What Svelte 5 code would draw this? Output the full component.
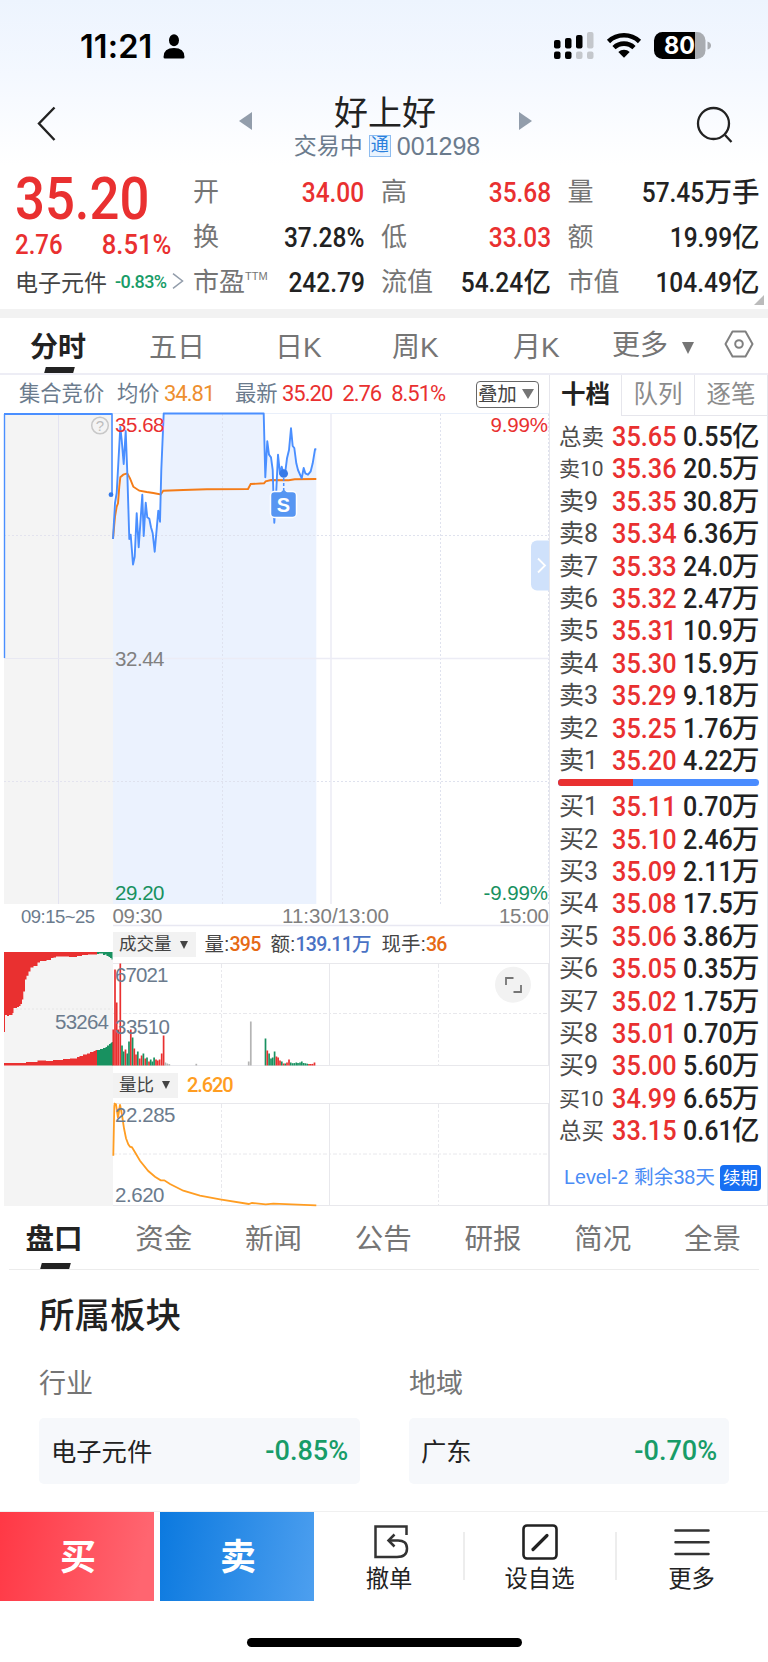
<script lang="ts">
    type Row = [string, string, string, string];

    const quotes = [
        { label: '开', value: '34.00', up: true },
        { label: '高', value: '35.68', up: true },
        { label: '量', value: '57.45', unit: '万手' },
        { label: '换', value: '37.28%' },
        { label: '低', value: '33.03', up: true },
        { label: '额', value: '19.99', unit: '亿' },
        { label: '市盈', sup: 'TTM', value: '242.79' },
        { label: '流值', value: '54.24', unit: '亿' },
        { label: '市值', value: '104.49', unit: '亿' },
    ];

    const periods = ['分时', '五日', '日K', '周K', '月K'];
    const sections = ['盘口', '资金', '新闻', '公告', '研报', '简况', '全景'];

    const asks: Row[] = [
        ['总卖', '35.65', '0.55', '亿'],
        ['卖10', '35.36', '20.5', '万'],
        ['卖9', '35.35', '30.8', '万'],
        ['卖8', '35.34', '6.36', '万'],
        ['卖7', '35.33', '24.0', '万'],
        ['卖6', '35.32', '2.47', '万'],
        ['卖5', '35.31', '10.9', '万'],
        ['卖4', '35.30', '15.9', '万'],
        ['卖3', '35.29', '9.18', '万'],
        ['卖2', '35.25', '1.76', '万'],
        ['卖1', '35.20', '4.22', '万'],
    ];
    const bids: Row[] = [
        ['买1', '35.11', '0.70', '万'],
        ['买2', '35.10', '2.46', '万'],
        ['买3', '35.09', '2.11', '万'],
        ['买4', '35.08', '17.5', '万'],
        ['买5', '35.06', '3.86', '万'],
        ['买6', '35.05', '0.35', '万'],
        ['买7', '35.02', '1.75', '万'],
        ['买8', '35.01', '0.70', '万'],
        ['买9', '35.00', '5.60', '万'],
        ['买10', '34.99', '6.65', '万'],
        ['总买', '33.15', '0.61', '亿'],
    ];

    const boards = [
        { kind: '行业', name: '电子元件', change: '-0.85%' },
        { kind: '地域', name: '广东', change: '-0.70%' },
    ];

    const price =
        '113,539 115,503 116.7,493 120.3,427 121.7,440 123.7,464 125.7,431 127.3,473 129.3,539 130.7,534.7 133,564.5 134.7,556.7 136.7,513.3 138.7,547.3 142.3,494.7 143.7,536 145.7,502.7 147.3,517.3 149.3,518.7 151,527.3 152.7,533.3 154.7,551.7 158.3,510.7 160,521.7 161.3,470 163.7,413.5 263.7,413.5 265.3,477.3 267.3,441.3 269,454.7 271,457.3 272.7,470 274.3,522.7 276.3,490 278,454.7 280,474 281.7,466.7 283.7,474 285.3,471.7 287,458.3 289,450 291,428.3 292.7,446 294.3,448 296.3,463.3 298,470 301.7,478.3 303.7,468 305.3,473.3 308,474.7 310.7,471.3 312.7,463.3 315,449.3 316.3,449.3';
    const average =
        '113,539 115,516.7 116.7,506.7 118,503.3 119.3,486.7 120.3,477.3 123.3,474.7 127.3,473.3 130,478.3 133.3,486.7 139.3,490.7 146.7,492 153.3,493 160.7,494.5 163.3,490.7 183.3,490 206.7,489.3 248,489 250.7,484 264,483.3 265.7,481.3 271,480 288.7,480.3 294.7,479.3 316.3,479';
    const ratio =
        '113.3,1155.7 114.3,1106 114.7,1103.7 116,1104.3 118,1118 120,1104.3 122,1115 124,1128.3 126,1138.3 128.3,1144.3 130,1146.7 132,1147.3 134.7,1151.7 140,1160.7 148.3,1171 155,1176.7 160.7,1180.3 164.3,1180.3 170,1184 183.3,1190.7 200,1195.7 220,1199.3 248.7,1204 252,1203 265.7,1204.3 273.3,1203.7 316.3,1205.3';

    // volume bars: x, height, colour key
    const volume: [number, number, string][] = [
        [113.3, 36, 'r'], [115, 96, 'r'], [116.7, 63, 'r'], [118.3, 36, 'r'], [120.3, 102, 'r'],
        [122, 20, 'g'], [123.7, 14, 'g'], [125.5, 16, 'r'], [127.3, 12, 'g'], [129, 24, 'g'],
        [130.8, 36, 'r'], [132.6, 28, 'g'], [134.3, 17, 'r'], [136, 11, 'r'], [137.8, 14, 'g'],
        [139.7, 7, 'r'], [141.6, 10, 'r'], [143.4, 12, 'g'], [145.3, 7, 'r'], [147, 8, 'g'],
        [149, 4, 'r'], [150.7, 6, 'g'], [152.4, 4, 'g'], [154.1, 8, 'g'], [156, 6, 'r'],
        [157.7, 5, 'r'], [159.6, 6, 'r'], [161.7, 12, 'r'], [163.6, 30, 'r'], [165.4, 3, 'n'],
        [167.3, 2, 'n'], [169.3, 1.4, 'n'], [196.3, 1.7, 'n'], [248.7, 4, 'n'], [250.8, 44, 'n'],
        [265.5, 27, 'g'], [267.3, 15, 'r'], [269.1, 12, 'g'], [271, 7, 'g'], [272.7, 8, 'g'],
        [274.6, 14, 'g'], [276.4, 9, 'r'], [278.1, 8, 'r'], [280, 5, 'r'], [281.8, 4, 'g'],
        [283.6, 2, 'r'], [285.3, 2, 'g'], [287, 3, 'r'], [289, 6, 'r'], [290.7, 3, 'g'],
        [292.6, 2.3, 'g'], [294.4, 2.4, 'g'], [296.3, 3, 'g'], [298, 2.5, 'g'], [300, 3, 'g'],
        [301.8, 4, 'g'], [303.6, 2.5, 'g'], [305.4, 2.2, 'g'], [307.2, 1.8, 'g'], [309, 1.5, 'r'],
        [310.8, 1.5, 'r'], [312.6, 1.6, 'r'], [314.5, 3, 'r'],
    ];
    const colours: Record<string, string> = { r: '#e93030', g: '#189160', n: '#b4b4b4' };
</script>

{#snippet book(rows: Row[])}
    {#each rows as [name, px, vol, unit]}
        <div class="level">
            <span class="name" class:total={name[0] === '总'} class:ten={name.length === 3}>{name}</span>
            <span class="px"><span class="fig">{px}</span></span>
            <span class="vol"><span class="fig">{vol}</span>{unit}</span>
        </div>
    {/each}
{/snippet}

<div class="page">
    <header>
        <div class="status">
            <span class="clock">11:21</span>
            <svg class="person" width="22" height="25" viewBox="0 0 22 25">
                <ellipse cx="11" cy="6.2" rx="5" ry="6" />
                <path d="M0.5 23Q0.5 14 11 14T21.5 23Q21.5 24.5 20 24.5H2Q0.5 24.5 0.5 23Z" />
            </svg>
            <svg class="indicators" width="160" height="30" viewBox="552 31 160 30">
                <rect x="553" y="40" width="6.5" height="8.5" rx="2" />
                <rect x="564" y="38" width="6.5" height="10.5" rx="2" />
                <rect x="575" y="35" width="6.5" height="13.5" rx="2" />
                <rect x="586" y="32" width="6.5" height="16.5" rx="2" fill="#c4c7cc" />
                <rect x="553" y="51.5" width="6.5" height="7.5" rx="2" />
                <rect x="564" y="51.5" width="6.5" height="7.5" rx="2" />
                <rect x="575" y="51.5" width="6.5" height="7.5" rx="2" fill="#c4c7cc" />
                <rect x="586" y="51.5" width="6.5" height="7.5" rx="2" fill="#c4c7cc" />
                <g fill="none" stroke="#000" stroke-width="4.6">
                    <path d="M607.5 41.5a22.5 22.5 0 0 1 31 0" />
                    <path d="M613 47.6a14.5 14.5 0 0 1 20 0" />
                </g>
                <path d="M617.3 52a8.3 8.3 0 0 1 11.4 0L623 57.8Z" />
                <path d="M661.5 32H694v27H661.5a8.5 8.5 0 0 1-8.5-8.5v-10a8.5 8.5 0 0 1 8.5-8.5Z" />
                <path d="M694 32h2a8.5 8.5 0 0 1 8.5 8.5v10a8.5 8.5 0 0 1-8.5 8.5h-2Z" fill="#a9acb1" />
                <path d="M706.5 41.5q3.5 1 3.5 4t-3.5 4Z" fill="#a9acb1" />
                <text x="663" y="54" class="battery" textLength="31" lengthAdjust="spacingAndGlyphs">80</text>
            </svg>
        </div>
        <div class="nav">
            <svg width="20" height="36" viewBox="0 0 20 36" fill="none" stroke="#222" stroke-width="2.4">
                <path d="M17.5 1.5 2 17.5 17.5 34" />
            </svg>
            <div class="stock">
                <svg width="13" height="18" viewBox="0 0 13 18" fill="#929dab"><path d="M13 0v18L0 9Z" /></svg>
                <div class="heading">
                    <h1>好上好</h1>
                    <p>交易中 <i>通</i> <b>001298</b></p>
                </div>
                <svg width="13" height="18" viewBox="0 0 13 18" fill="#929dab"><path d="M0 0v18L13 9Z" /></svg>
            </div>
            <svg width="38" height="38" viewBox="0 0 38 38" fill="none" stroke="#222" stroke-width="2.3">
                <circle cx="17.5" cy="17.5" r="15.5" />
                <path d="M29 29 35.5 36" />
            </svg>
        </div>
    </header>

    <section class="quote">
        <div class="last">
            <div class="big"><span class="fig">35.20</span></div>
            <div class="delta"><span class="fig">2.76</span><span class="fig end">8.51%</span></div>
            <div class="sector">
                电子元件<em>-0.83%</em>
                <svg width="12" height="16" viewBox="0 0 12 16" fill="none" stroke="#929dab" stroke-width="1.5">
                    <path d="M1 .7 10.5 8 1 15.3" />
                </svg>
            </div>
        </div>
        <dl>
            {#each quotes as q}
                <div>
                    <dt>{q.label}{#if q.sup}<sup>{q.sup}</sup>{/if}</dt>
                    <dd class:up={q.up}><span class="fig end">{q.value}</span>{q.unit ?? ''}</dd>
                </div>
            {/each}
        </dl>
        <span class="fold"></span>
    </section>

    <nav class="periods">
        {#each periods as p, i}
            <span class:active={i === 0}>{p}</span>
        {/each}
        <span class="more">更多<svg width="12" height="12" viewBox="0 0 12 12" fill="#757575"><path d="M0 0h12L6 12Z" /></svg></span>
        <svg class="gear" width="30" height="28" viewBox="0 0 30 28" fill="none" stroke="#808080" stroke-width="2">
            <path d="M8.5 1.5h13L28.5 14l-7 12.5h-13L1.5 14Z" stroke-linejoin="round" />
            <circle cx="15" cy="14" r="3.8" />
        </svg>
    </nav>

    <main>
        <div class="charts">
            <div class="legend">
                <span class="auction">集合竞价</span>
                <span class="avg">均价</span><b class="orange">34.81</b>
                <span class="now">最新</span><b>35.20</b><b class="chg">2.76</b><b class="pct">8.51%</b>
                <span class="overlay">叠加<svg width="12" height="10" viewBox="0 0 12 10" fill="#757575"><path d="M0 0h12L6 10Z" /></svg></span>
            </div>
            <div class="panels">
                <svg class="labels" width="113" height="793" viewBox="0 413 113 793">
                    <rect x="4" y="413" width="109" height="491" fill="#f4f4f4" />
                    <rect x="4" y="952" width="109" height="254" fill="#f4f4f4" />
                    <path d="M58.5 415V904" stroke="#e3e3f1" />
                    <path d="M4 535.5H113M4 781.5H113" stroke="#e3e3ee" stroke-dasharray="2 2" />
                    <path d="M4 658.5H113" stroke="#e8e8f2" />
                    <path d="M4.5 658V414" stroke="#4a8fff" stroke-width="1.4" />
                    <path d="M4 414H112V494" stroke="#4a8fff" stroke-width="1.6" fill="none" />
                    <path d="M4 414H112" stroke="#4a8fff" stroke-width="2" />
                    <circle cx="111" cy="494.7" r="2.4" fill="#3579e8" />
                    <circle cx="100" cy="425.5" r="8.3" fill="none" stroke="#c8c8c8" stroke-width="1.5" />
                    <text x="100" y="431" font-size="15" text-anchor="middle" fill="#bdbdbd">?</text>
                    <text x="21" y="922.5" class="slate" textLength="74" font-size="18.5">09:15~25</text>

                    <path d="M4 1009H113" stroke="#e6e6e6" stroke-dasharray="2 2" />
                    <path
                        fill="#e93030"
                        d="M4 952V1032H5V1015H7V1016H9V1015H12.5V1013H13.5V1008H17V1007H19V1006H20.5V1004H22V999.5H23.3V991.5H25V979.5H26.5V975.7H28.5V971.5H30.5V967.5H33.5V966H37.5V962.5H40V961H46.5V960H51V958H53.5V957.5H56V956.5H69V957H77V956H82V955H88V954.5H97V952Z"
                    />
                    <path fill="#189160" d="M97 952V954H99V953.5H103V955H105V954.5H106.5V956H108.5V957H110V958H111.5V959.5H112.5V952Z" />
                    <path
                        fill="#e93030"
                        d="M4 1065.5V1063H26V1062H37.5V1060.5H46V1061H53V1060H63V1059H70V1058.5H77V1057H79.5V1056H83V1054.5H87V1053.5H90V1052H93.5V1051H95.5V1050H97V1065.5Z"
                    />
                    <path fill="#189160" d="M97 1065.5V1050H100V1049H103V1048H105.5V1047H107V1045.5H109V1044H110.5V1043H111.5V1042H113V1065.5Z" />
                    <text x="55" y="1028.5" class="slate" textLength="54">53264</text>
                </svg>

                <div class="stack">
                    <svg class="labels" width="436" height="512" viewBox="113 413 436 512">
                        <path d="M113 413.5H549" stroke="#e9effa" />
                        <polygon points="113,904 {price} 316.3,904" fill="#ebf2fe" />
                        <path d="M222.5 414V904M440.5 414V904M548.5 414V904M113 535.5H549M113 781.5H549" stroke="#dfe2ee" stroke-dasharray="2 2" />
                        <path d="M331 414V904M113 658.5H549" stroke="#ececf5" stroke-width="1.5" />
                        <path d="M113 925.5H549" stroke="#e8e8f2" stroke-width="1.3" />
                        <polyline points={average} fill="none" stroke="#f47c18" stroke-width="1.9" />
                        <polyline points={price} fill="none" stroke="#4a8fff" stroke-width="1.9" stroke-linejoin="round" />

                        <text x="115" y="432" fill="#e93030" textLength="49.5">35.68</text>
                        <text x="548" y="432" fill="#e93030" text-anchor="end" textLength="57.5">9.99%</text>
                        <text x="115" y="666" fill="#808080" textLength="49.5">32.44</text>
                        <text x="115" y="900" fill="#189160" textLength="49.5">29.20</text>
                        <text x="548" y="900" fill="#189160" text-anchor="end" textLength="64.5">-9.99%</text>
                        <text x="112.5" y="923" fill="#808080" textLength="50">09:30</text>
                        <text x="282" y="923" fill="#808080" textLength="107">11:30/13:00</text>
                        <text x="549" y="923" fill="#808080" text-anchor="end" textLength="50">15:00</text>

                        <circle cx="283.7" cy="473.5" r="4.3" fill="#3579e8" />
                        <path d="M283.7 478V492" stroke="#4a8fff" stroke-width="1.5" stroke-dasharray="3 2" />
                        <rect x="270.5" y="491.5" width="26" height="26" rx="4" fill="#5796f2" stroke="#fff" stroke-width="1.5" />
                        <path d="M280 493 283.7 489.5 287.5 493Z" fill="#5796f2" />
                        <text x="283.5" y="511.5" text-anchor="middle" class="mark">S</text>

                        <path d="M549 540.5H537a6 6 0 0 0-6 6v38a6 6 0 0 0 6 6h12Z" fill="#cfe1fb" />
                        <path d="M538 558.5 545 565.5 538 572.5" fill="none" stroke="#fff" stroke-width="1.8" />
                    </svg>
                    <div class="toolbar">
                        <span class="pick">成交量<svg width="8" height="8" viewBox="0 0 8 8"><path d="M0 0h8L4 8Z" /></svg></span>
                        <span class="m1">量:<b class="hot">395</b></span>
                        <span class="m2">额:<b class="blue">139.11万</b></span>
                        <span class="m3">现手:<b class="hot">36</b></span>
                    </div>
                    <svg class="labels" width="436" height="103" viewBox="113 963 436 103">
                        <path d="M113 963.5H549M113 1065.5H549" stroke="#e8e8ec" />
                        <path d="M221.5 964V1065M438.5 964V1065M113 1013.5H549" stroke="#e8e8ec" stroke-dasharray="4 2 2 2" />
                        <path d="M329.5 964V1065M548.5 964V1065" stroke="#e8e8ec" />
                        {#each volume as [x, h, c]}
                            <rect x={x - 0.85} y={1065.5 - h} width="1.7" height={h} fill={colours[c]} />
                        {/each}
                        <text x="115" y="982" class="slate" textLength="53.5">67021</text>
                        <text x="115" y="1033.5" class="slate" textLength="55">33510</text>
                        <circle cx="513" cy="984.7" r="18" fill="#f2f2f2" />
                        <path d="M506 985V978H513.5M521 985V992H513.5" fill="none" stroke="#757575" stroke-width="1.8" />
                    </svg>
                    <div class="toolbar second">
                        <span class="pick">量比<svg width="8" height="8" viewBox="0 0 8 8"><path d="M0 0h8L4 8Z" /></svg></span>
                        <b class="ratio">2.620</b>
                    </div>
                    <svg class="labels" width="436" height="103" viewBox="113 1103 436 103">
                        <path d="M113 1103.5H549M113 1205.5H549" stroke="#e8e8ec" />
                        <path d="M221.5 1104V1205M438.5 1104V1205M113 1154H549" stroke="#e8e8ec" stroke-dasharray="4 2 2 2" />
                        <path d="M329.5 1104V1205M548.5 1104V1205" stroke="#e8e8ec" />
                        <polyline points={ratio} fill="none" stroke="#ff9d22" stroke-width="1.8" />
                        <text x="115" y="1122" class="slate" textLength="60.5">22.285</text>
                        <text x="115" y="1201.5" class="slate" textLength="49.5">2.620</text>
                    </svg>
                </div>
            </div>
        </div>

        <aside>
            <div class="booktabs"><span class="active">十档</span><span>队列</span><span>逐笔</span></div>
            <div class="book">
                {@render book(asks)}
                <div class="balance"><span></span></div>
                {@render book(bids)}
            </div>
            <div class="level2"><p>Level-2 剩余38天</p><span>续期</span></div>
        </aside>
    </main>

    <nav class="sections">
        {#each sections as s, i}
            <span class:active={i === 0}>{s}</span>
        {/each}
    </nav>

    <section class="boards">
        <h2>所属板块</h2>
        <div class="pair">
            {#each boards as b}
                <div>
                    <h3>{b.kind}</h3>
                    <div class="card"><span>{b.name}</span><b class="fig end">{b.change}</b></div>
                </div>
            {/each}
        </div>
    </section>

    <footer>
        <div class="actions">
            <button class="buy">买</button>
            <button class="sell">卖</button>
            <div class="action">
                <svg width="36" height="36" viewBox="0 0 36 36" fill="none" stroke="#333" stroke-width="2.5">
                    <path d="M33.5 11V2.5H2.5V33H24Q34 33 34 24.5T24 16.5H16" />
                    <path d="M21.5 10.5 15.5 16.5 21.5 22.5" />
                </svg>
                撤单
            </div>
            <div class="action">
                <svg width="36" height="36" viewBox="0 0 36 36" fill="none" stroke="#222" stroke-width="2.6">
                    <rect x="1.5" y="1.5" width="33" height="33" rx="3.5" />
                    <path d="M11 25.5 25 11.5" stroke-width="3.2" stroke-linecap="round" />
                </svg>
                设自选
            </div>
            <div class="action">
                <svg width="36" height="36" viewBox="0 0 36 36" fill="none" stroke="#333" stroke-width="2.5" stroke-linecap="round">
                    <path d="M1.5 6.5H34.5M1.5 18.2H34.5M1.5 30H34.5" />
                </svg>
                更多
            </div>
        </div>
        <div class="home"></div>
    </footer>
</div>

<style>
    :global(body) {
        background: #fff;
    }
    .page {
        --up: #e93030;
        --down: #189c68;
        --num: Roboto, 'Noto Sans CJK SC', sans-serif;
        width: 768px;
        height: 1662px;
        overflow: hidden;
        background: #fff;
        color: #222;
        font-family: 'Liberation Sans', 'Noto Sans CJK SC', sans-serif;
    }
    .page * {
        box-sizing: border-box;
    }
    svg {
        display: block;
        flex: none;
    }
    /* narrow figures */
    .fig {
        display: inline-block;
        transform: scaleX(0.92);
        transform-origin: left;
    }
    .fig.end {
        transform-origin: right;
    }
    header {
        height: 165px;
        background: linear-gradient(#edf4fe, #f4f8ff 45%, #fff);
    }
    .status {
        height: 90px;
        display: flex;
        padding: 31px 55px 0 80px;
    }
    .clock {
        width: 83px;
        font: 600 32.5px/31px Inter, sans-serif;
        letter-spacing: 0.1px;
        color: #000;
    }
    .person {
        margin-top: 3px;
    }
    .indicators {
        margin-left: auto;
    }
    .battery {
        font: 700 24px Inter, sans-serif;
        fill: #fff;
    }
    .nav {
        display: flex;
        justify-content: space-between;
        padding: 1px 34px 0 37px;
    }
    .nav > svg {
        margin-top: 15px;
    }
    .stock {
        display: flex;
        margin-left: 17px;
    }
    .stock > svg {
        margin-top: 21px;
    }
    .heading {
        width: 267px;
        text-align: center;
    }
    h1 {
        margin: 2px 0 0;
        font-size: 34px;
        font-weight: 400;
        line-height: 40px;
    }
    .heading p {
        margin: 0 0 0 4px;
        display: flex;
        justify-content: center;
        align-items: center;
        gap: 6px;
        color: #6b7b8d;
        font-size: 23px;
        line-height: 26px;
    }
    .heading p i {
        width: 22px;
        height: 22px;
        border: 1px solid #8dbcf0;
        background: #e9f3fe;
        color: #2a80dd;
        font-style: normal;
        font-size: 18px;
        line-height: 19px;
    }
    .heading p b {
        font-weight: 400;
        font-size: 25px;
    }

    .quote {
        position: relative;
        height: 153px;
        display: flex;
        border-bottom: 9px solid #f2f2f2;
        padding-left: 15px;
    }
    .last {
        width: 178px;
        color: var(--up);
        font-family: var(--num);
        font-weight: 500;
    }
    .big {
        height: 64px;
        padding-top: 5px;
        font-size: 58.5px;
        line-height: 59px;
    }
    .big .fig {
        transform: scaleX(0.9);
    }
    .delta {
        display: flex;
        justify-content: space-between;
        width: 156px;
        height: 36px;
        font-size: 27px;
        line-height: 32px;
    }
    .delta .fig {
        transform: scaleX(0.89);
    }
    .delta .end {
        transform: scaleX(0.95);
    }
    .sector {
        display: flex;
        align-items: center;
        height: 32px;
        color: #444;
        font-size: 23px;
        font-weight: 400;
    }
    .sector em {
        width: 57px;
        margin-left: 8px;
        color: var(--down);
        font: 500 18px var(--num);
        letter-spacing: -0.6px;
    }
    dl {
        margin: 4.5px 0 0;
        display: grid;
        grid-template-columns: 171.5px 170px 192px;
        column-gap: 16.5px;
        grid-auto-rows: 45px;
    }
    dl div {
        display: flex;
        justify-content: space-between;
        line-height: 45px;
        white-space: nowrap;
    }
    dt {
        display: flex;
        color: #757575;
        font-size: 26px;
    }
    sup {
        font-size: 11px;
        line-height: 33px;
    }
    dd {
        margin: 0;
        font-family: var(--num);
        font-weight: 500;
        font-size: 27.5px;
    }
    dd .fig {
        transform: scaleX(0.89);
    }
    .up {
        color: var(--up);
    }
    .fold {
        position: absolute;
        right: 4px;
        bottom: 4px;
        border-left: 10px solid transparent;
        border-bottom: 10px solid #bbb;
    }

    .periods {
        display: flex;
        height: 57px;
        padding-left: 30px;
        border-bottom: 2px solid #ededf5;
        color: #757575;
        font-size: 28px;
        line-height: 59px;
    }
    .periods > span {
        width: 121px;
        height: 55px;
    }
    .periods span:nth-child(2) {
        width: 126px;
        margin-left: -2px;
    }
    .periods span:nth-child(3) {
        width: 117px;
    }
    .periods span:nth-child(5) {
        width: 99px;
    }
    .periods .more {
        display: flex;
        align-items: center;
        width: 112px;
    }
    .more svg {
        margin: 4px 0 0 14px;
    }
    .gear {
        margin-top: 12px;
    }
    .active {
        position: relative;
        color: #222;
        font-weight: 700;
    }
    .periods .active::after,
    .sections .active::after {
        content: '';
        position: absolute;
        left: 15px;
        bottom: 0;
        width: 29px;
        height: 6px;
        background: #222;
        transform: skewX(-15deg);
    }

    main {
        display: flex;
        height: 831px;
    }
    .charts {
        width: 549px;
    }
    .legend {
        display: flex;
        align-items: center;
        height: 38px;
        padding-left: 19px;
        color: #6b7b8d;
        font-size: 21.3px;
        line-height: 36px;
    }
    .legend b {
        color: var(--up);
        font-family: var(--num);
        font-weight: 400;
        font-size: 22px;
        letter-spacing: -1px;
    }
    .legend b.orange {
        color: #ee8f2f;
        width: 71px;
    }
    .auction {
        width: 98px;
    }
    .avg,
    .now {
        width: 47px;
    }
    .chg {
        margin-left: 10px;
    }
    .pct {
        margin-left: 10px;
    }
    .overlay {
        display: flex;
        align-items: center;
        width: 63px;
        height: 27px;
        margin: 0 10px 0 auto;
        padding-left: 1px;
        border: 1.5px solid #666;
        border-radius: 4px;
        color: #444;
        font-size: 19.5px;
        letter-spacing: -0.3px;
        line-height: 24px;
    }
    .overlay svg {
        margin-left: 6px;
    }
    .panels {
        display: flex;
    }
    .labels {
        font: 20.5px 'Liberation Sans', sans-serif;
        overflow: visible;
    }
    .mark {
        font-size: 20px;
        font-weight: 700;
        fill: #fff;
    }
    .slate {
        fill: #6b7b8d;
    }
    .stack {
        width: 436px;
    }
    .toolbar {
        display: flex;
        align-items: center;
        height: 38px;
        padding-top: 1px;
        color: #444;
        font-size: 20px;
        line-height: 25px;
    }
    .toolbar.second {
        height: 37px;
    }
    .toolbar b {
        font-family: var(--num);
        font-weight: 500;
        letter-spacing: -0.7px;
    }
    .pick {
        display: flex;
        align-items: center;
        gap: 8px;
        height: 25px;
        padding: 0 8px 0 6px;
        background: #f2f2f2;
        font-size: 17.5px;
        fill: #444;
    }
    .m1 {
        margin-left: 9px;
        width: 66px;
    }
    .m2 {
        width: 111px;
    }
    .m1,
    .m2,
    .m3 {
        font-size: 19.5px;
    }
    .hot {
        color: #e66a14;
    }
    .blue {
        color: #4a72c4;
    }
    .toolbar .ratio {
        margin-left: 9px;
        color: #ff9d22;
        letter-spacing: -1.1px;
    }

    aside {
        width: 219px;
        border-left: 1px solid #e6e6ec;
        border-right: 1px solid #e6e6ec;
        border-bottom: 1px solid #e6e6ec;
        display: flex;
        flex-direction: column;
    }
    .booktabs {
        display: grid;
        grid-template-columns: 71px 73px 1fr;
        height: 39.5px;
        text-align: center;
        color: #8c8c8c;
        font-size: 24.5px;
        line-height: 40px;
    }
    .booktabs span + span {
        border-left: 1px solid #e6e6ec;
        border-bottom: 1px solid #e6e6ec;
    }
    .book {
        padding: 6.5px 8px 0 9px;
    }
    .level {
        display: grid;
        grid-template-columns: 53px 71px 76px;
        height: 32.4px;
        line-height: 32px;
        white-space: nowrap;
        font-family: var(--num);
    }
    .name {
        font-size: 25px;
        color: #4c4c4c;
    }
    .name.total {
        font-size: 22.5px;
    }
    .name.ten {
        font-size: 21px;
    }
    .px,
    .vol {
        font-size: 27.5px;
        font-weight: 500;
    }
    .px {
        color: var(--up);
    }
    .vol {
        display: flex;
        justify-content: space-between;
    }
    .vol .fig {
        width: 49px;
        transform: scaleX(0.91);
    }
    .balance {
        height: 7px;
        margin: 2px 0 5px -1px;
        border-radius: 4px;
        background: #4a8cff;
        overflow: hidden;
    }
    .balance span {
        display: block;
        width: 37.5%;
        height: 100%;
        background: var(--up);
    }
    .level2 {
        margin-top: auto;
        display: flex;
        align-items: center;
        justify-content: flex-end;
        gap: 5px;
        height: 26px;
        margin-bottom: 14px;
        padding-right: 6px;
        color: #4a8cf5;
        font-size: 19.7px;
        white-space: nowrap;
    }
    .level2 p {
        margin: 0;
        line-height: 23px;
        padding-bottom: 1px;
    }
    .level2 span {
        width: 41px;
        height: 26px;
        border-radius: 4px;
        background: #176ff2;
        color: #fff;
        font-size: 17.5px;
        line-height: 26px;
        text-align: center;
    }

    .sections {
        display: flex;
        justify-content: space-between;
        height: 64px;
        margin: 0 9px;
        padding: 0 18px 0 16.5px;
        border-bottom: 1px solid #ececec;
        color: #757575;
        font-size: 28.5px;
        line-height: 67px;
    }
    .sections span {
        height: 64px;
    }
    .sections .active::after {
        bottom: 1px;
    }
    .boards {
        height: 241px;
        padding: 24px 39px 0;
    }
    h2 {
        margin: 0;
        font-size: 35.5px;
        font-weight: 500;
        line-height: 44px;
    }
    .pair {
        display: grid;
        grid-template-columns: 321px 320px;
        column-gap: 49px;
    }
    h3 {
        margin: 26px 0 14px;
        color: #757575;
        font-size: 27px;
        font-weight: 400;
        line-height: 40px;
    }
    .card {
        display: flex;
        justify-content: space-between;
        align-items: center;
        height: 66px;
        padding: 0 12px 2px;
        border-radius: 5px;
        background: #f6f8fb;
        font-size: 25.3px;
    }
    .card b {
        color: var(--down);
        font: 500 28.5px var(--num);
        transform: scaleX(0.95);
    }

    .actions {
        display: flex;
        height: 90px;
        border-top: 1px solid #f0f0f0;
    }
    button {
        flex: none;
        width: 154px;
        padding: 0 0 5px 2px;
        border: 0;
        color: #fff;
        font: 700 36px 'Noto Sans CJK SC', sans-serif;
    }
    .buy {
        background: linear-gradient(100deg, #ff3845, #ff6570 90%);
    }
    .sell {
        margin-left: 6px;
        background: linear-gradient(100deg, #0b79df, #4d9fef);
    }
    .action {
        position: relative;
        width: 152px;
        display: flex;
        flex-direction: column;
        align-items: center;
        padding: 12px 0 0 1px;
        font-size: 23.3px;
        line-height: 38px;
        color: #222;
    }
    .action:nth-child(3) {
        width: 149px;
    }
    .action:nth-child(3) > svg {
        margin-left: 3px;
    }
    .action + .action::before {
        content: '';
        position: absolute;
        left: 0;
        top: 20px;
        width: 2px;
        height: 48px;
        background: #ededed;
    }
    .home {
        width: 275px;
        height: 9px;
        margin: 37px auto 0;
        border-radius: 5px;
        background: #000;
    }
</style>
